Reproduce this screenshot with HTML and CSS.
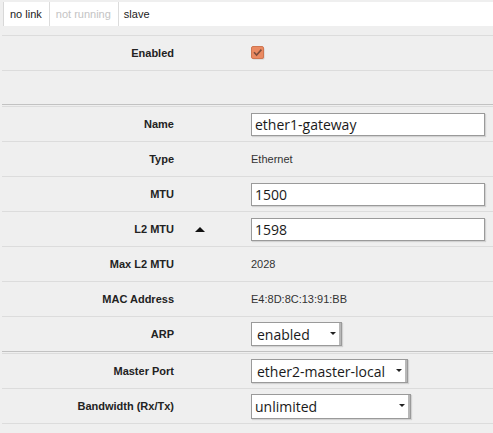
FILE: index.html
```html
<!DOCTYPE html>
<html>
<head>
<meta charset="utf-8">
<link rel="stylesheet" href="styles.css">
</head>
<body>
<div class="tabs">
  <div class="tab">no link</div>
  <div class="tab dim">not running</div>
  <div class="tab last">slave</div>
</div>
<div class="form">
  <div class="row">
    <div class="label">Enabled</div>
    <div class="mid"></div>
    <div class="val">
      <svg class="check" width="15" height="15" viewBox="0 0 15 15">
        <rect x="1.5" y="1.5" width="12" height="12" rx="1.5" fill="#000" opacity="0.15"/>
        <rect x="0.5" y="0.5" width="12" height="12" rx="1.5" fill="#ea8a62" stroke="#cf7651"/>
        <path d="M3 6.2 L5.6 9 L10.4 3.6" fill="none" stroke="#7d4d3c" stroke-width="1.6"/>
      </svg>
    </div>
  </div>
  <div class="row empty"></div>
  <div class="sep"></div>
  <div class="row">
    <div class="label">Name</div>
    <div class="mid"></div>
    <div class="val"><input class="inp" type="text" value="ether1-gateway"></div>
  </div>
  <div class="row">
    <div class="label">Type</div>
    <div class="mid"></div>
    <div class="val text">Ethernet</div>
  </div>
  <div class="row">
    <div class="label">MTU</div>
    <div class="mid"></div>
    <div class="val"><input class="inp" type="text" value="1500"></div>
  </div>
  <div class="row">
    <div class="label">L2 MTU</div>
    <div class="mid"><span class="tri"></span></div>
    <div class="val"><input class="inp" type="text" value="1598"></div>
  </div>
  <div class="row">
    <div class="label">Max L2 MTU</div>
    <div class="mid"></div>
    <div class="val text">2028</div>
  </div>
  <div class="row">
    <div class="label">MAC Address</div>
    <div class="mid"></div>
    <div class="val text">E4:8D:8C:13:91:BB</div>
  </div>
  <div class="row">
    <div class="label">ARP</div>
    <div class="mid"></div>
    <div class="val"><div class="sel w-arp"><span class="sel-text">enabled</span><span class="sel-btn"></span></div></div>
  </div>
  <div class="sep"></div>
  <div class="row">
    <div class="label">Master Port</div>
    <div class="mid"></div>
    <div class="val"><div class="sel w-master"><span class="sel-text">ether2-master-local</span><span class="sel-btn"></span></div></div>
  </div>
  <div class="row tall">
    <div class="label">Bandwidth (Rx/Tx)</div>
    <div class="mid"></div>
    <div class="val"><div class="sel w-bw"><span class="sel-text">unlimited</span><span class="sel-btn"></span></div></div>
  </div>
  <div class="row end"></div>
</div>
</body>
</html>
```
FILE: styles.css
```css
html, body {
  margin: 0;
  padding: 0;
  background: #efefef;
  font-family: "Liberation Sans", Arial, sans-serif;
  font-size: 11px;
  color: #222;
}
.tabs {
  display: flex;
  margin: 2px 0 0 3px;
  height: 24px;
  background: #fff;
  border-left: 1px solid #d8d8d8;
}
.tab {
  display: flex;
  align-items: center;
  padding: 0 7px 0 6px;
  border-right: 1px solid #dcdcdc;
  font-size: 11px;
  color: #222;
}
.tab.dim { color: #c4c4c4; }
.tab.last { border-right: none; flex: 1; padding-left: 5px; }
.form {
  margin: 9px 0 0 2px;
}
.row {
  display: grid;
  grid-template-columns: 172px 77px 1fr;
  align-items: center;
  height: 34px;
  border-top: 1px solid #dcdcdc;
}
.row.empty { height: 33px; }
.row.end { height: 0; }
.sep {
  height: 1px;
  border-top: 1px solid #c2c2c2;
}
.label {
  text-align: right;
  font-weight: bold;
  color: #222;
}
.mid {
  display: flex;
  align-items: center;
  padding-left: 21px;
}
.tri {
  width: 0;
  height: 0;
  border-left: 5px solid transparent;
  border-right: 5px solid transparent;
  border-bottom: 5px solid #111;
}
.val {
  display: flex;
  align-items: center;
}
.val.text { color: #333; }
.check { display: block; margin-top: 1px; }
.inp {
  box-sizing: border-box;
  width: 234px;
  height: 23px;
  margin: 0;
  padding: 0 3px;
  border: 1px solid #9a9a9a;
  border-radius: 0;
  background: #fff;
  box-shadow: 1px 1px 1px rgba(0,0,0,0.12);
  font-family: "Open Sans", "Noto Sans", sans-serif;
  font-size: 14px;
  color: #1a1a1a;
  outline: none;
}
.sel {
  box-sizing: border-box;
  position: relative;
  display: flex;
  align-items: center;
  height: 24px;
  border: 1px solid #9a9a9a;
  background: #fff;
  box-shadow: 1px 1px 1px rgba(0,0,0,0.12);
  font-family: "Open Sans", "Noto Sans", sans-serif;
  font-size: 14px;
  color: #1a1a1a;
}
.sel-text {
  flex: 1;
  padding-left: 5px;
  white-space: nowrap;
}
.sel-btn {
  position: relative;
  align-self: stretch;
  width: 12px;
  border-right: 2px solid #b8b8b8;
  background: #fff;
}
.sel-btn::after {
  content: "";
  position: absolute;
  left: 3px;
  top: 9px;
  border-left: 3px solid transparent;
  border-right: 3px solid transparent;
  border-top: 3px solid #222;
}
.w-arp { width: 91px; }
.w-master { width: 157px; }
.w-bw { width: 160px; height: 25px; }
.w-bw .sel-text { padding-left: 3px; }
```
